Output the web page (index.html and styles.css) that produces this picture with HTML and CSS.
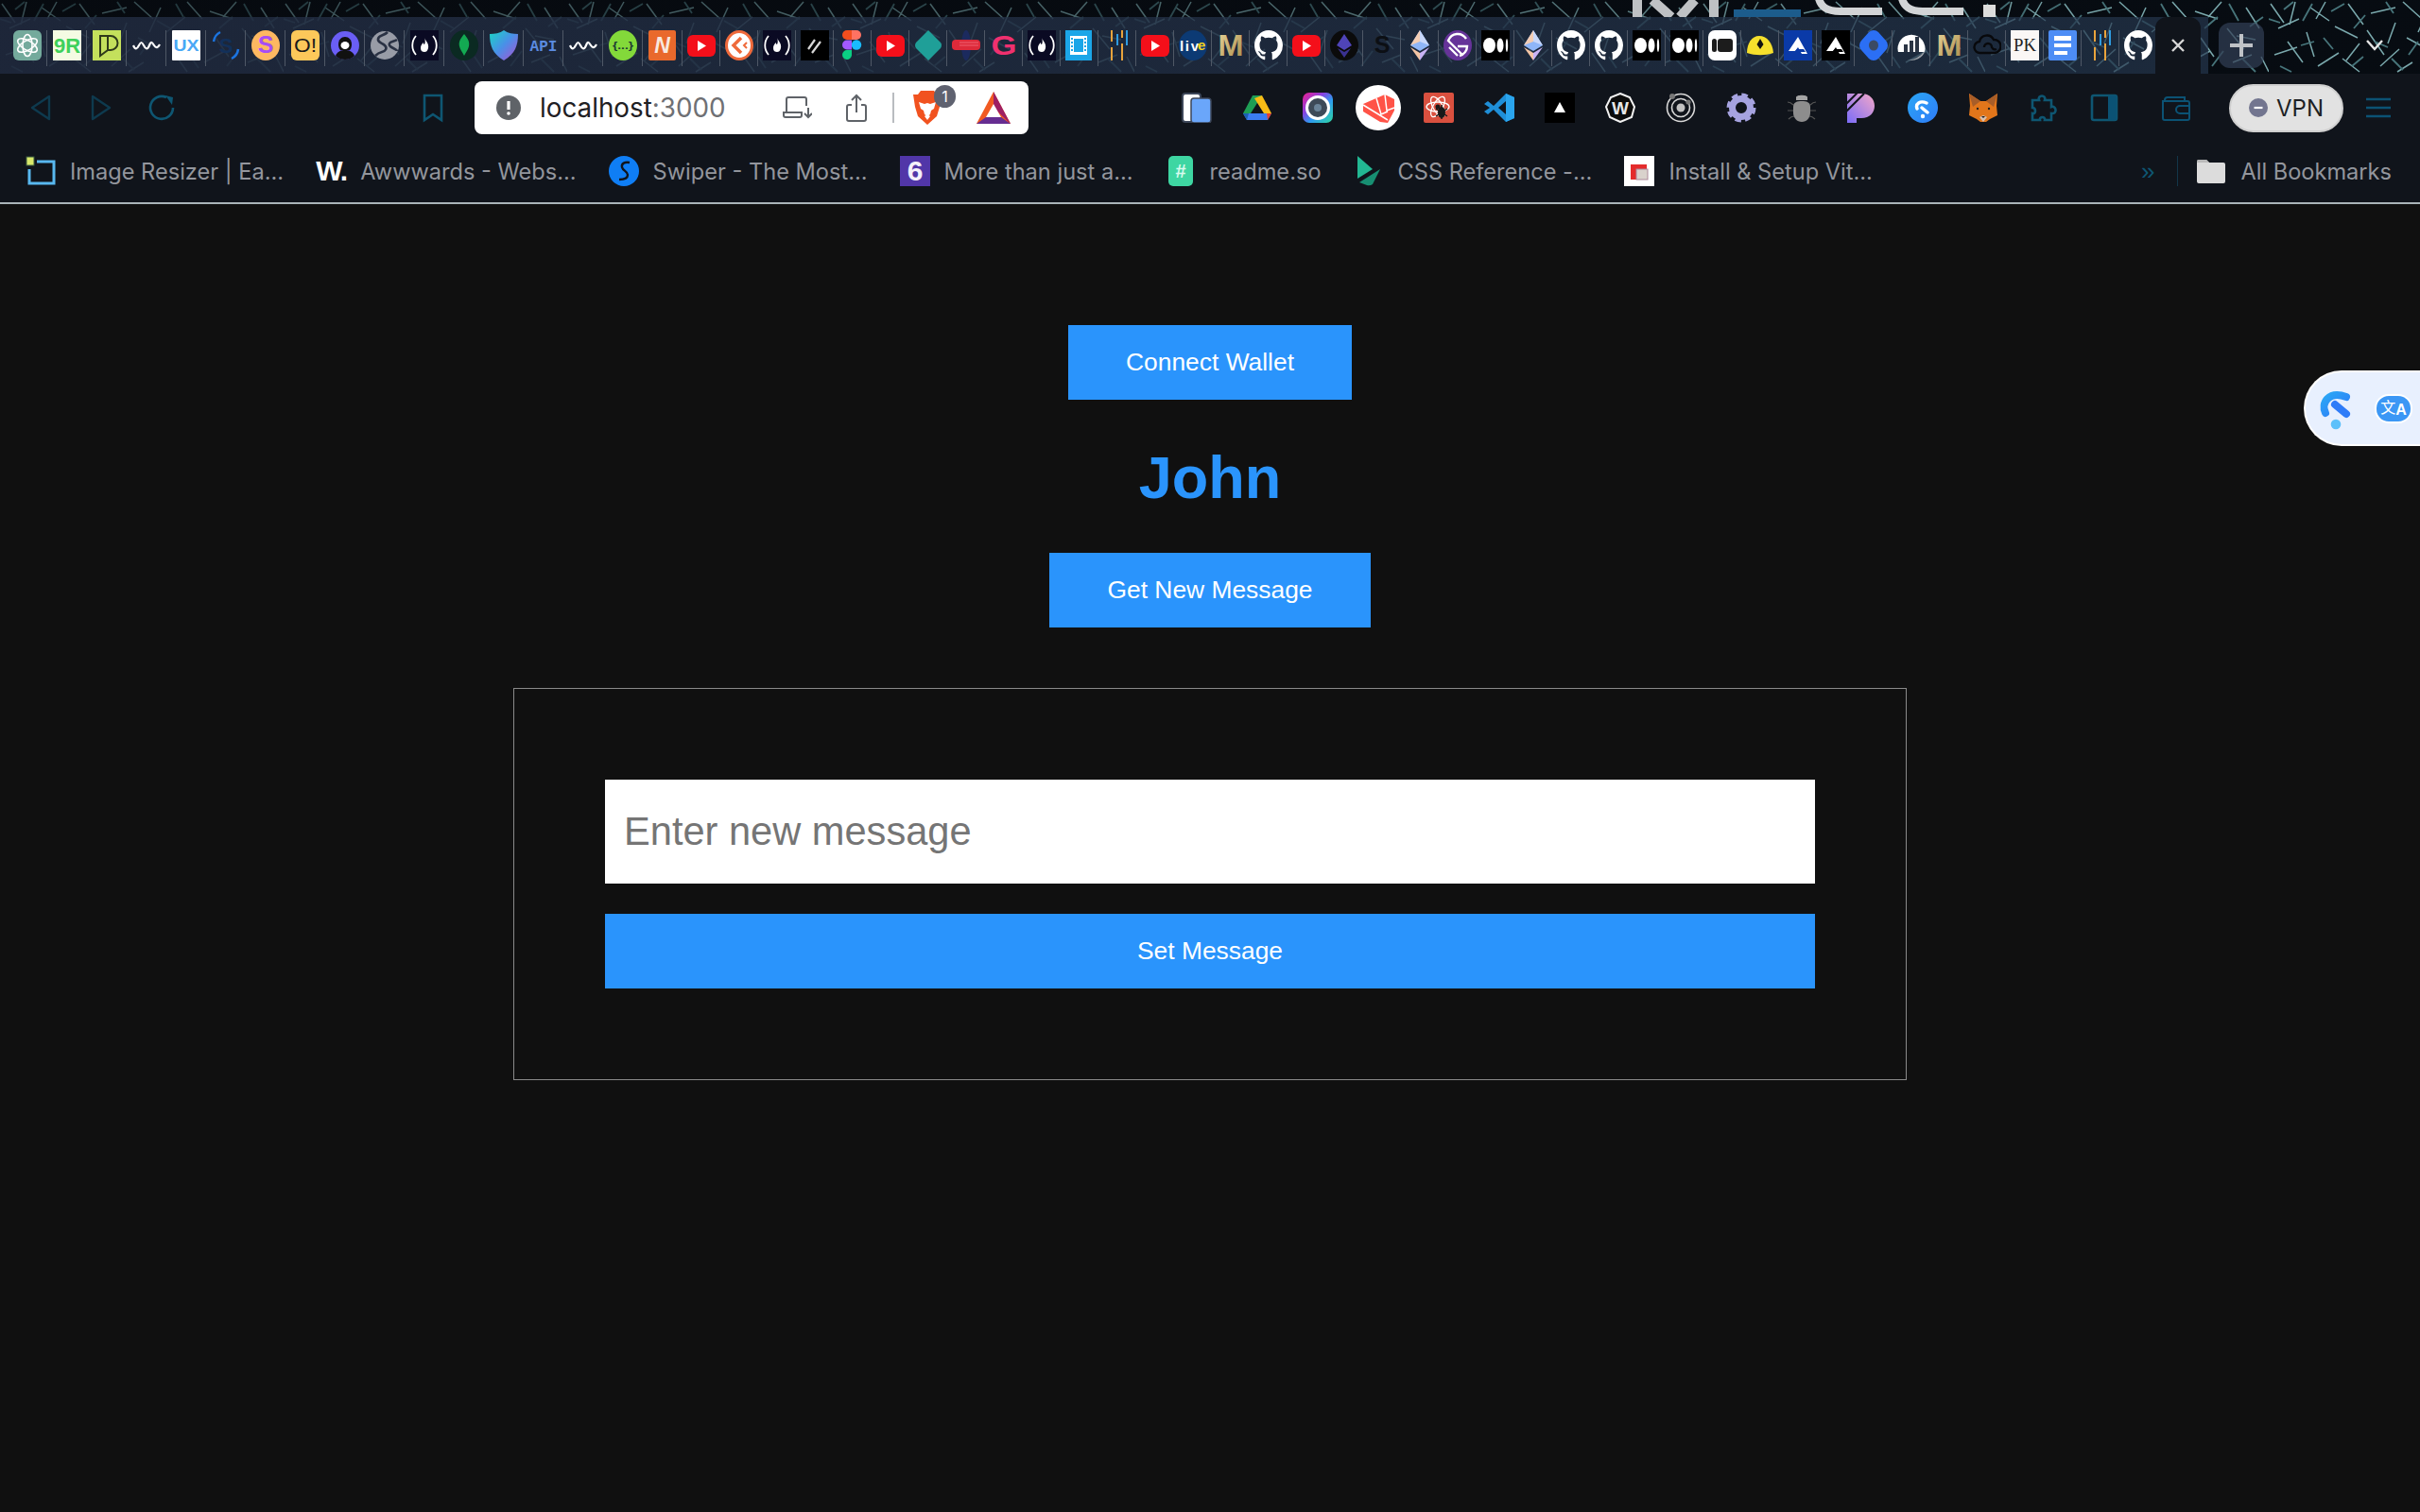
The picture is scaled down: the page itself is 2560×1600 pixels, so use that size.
FILE: index.html
```html
<!DOCTYPE html>
<html lang="en">
<head>
  <meta charset="UTF-8">
  <meta name="viewport" content="width=device-width, initial-scale=1.0">
  <title>localhost:3000</title>
  <link rel="stylesheet" href="styles.css">
</head>
<body>
  <!-- favicons used more than once -->
  <svg class="defs" aria-hidden="true">
    <defs>
      <linearGradient id="shieldGrad" x1="0" y1="0" x2="1" y2="1"><stop offset="0" stop-color="#18d6c4"/><stop offset=".5" stop-color="#4a8fe8"/><stop offset="1" stop-color="#b04fd0"/></linearGradient>
      <linearGradient id="goldGrad" x1="0" y1="0" x2="1" y2="1"><stop offset="0" stop-color="#e8d49a"/><stop offset="1" stop-color="#a88a48"/></linearGradient>
      <linearGradient id="camGrad" x1="0" y1="0" x2="1" y2="1"><stop offset="0" stop-color="#ee1f8e"/><stop offset=".35" stop-color="#8a3fe0"/><stop offset=".6" stop-color="#2d9bf0"/><stop offset="1" stop-color="#2fd8a0"/></linearGradient>
      <linearGradient id="patGrad" x1="1" y1="0" x2="0" y2="1"><stop offset="0" stop-color="#f5a8c8"/><stop offset="1" stop-color="#7a6cf8"/></linearGradient>
      <linearGradient id="siderGrad" x1="0" y1="0" x2="1" y2="1"><stop offset="0" stop-color="#2aa6f5"/><stop offset="1" stop-color="#2f7cf8"/></linearGradient>
      <symbol id="i-wave" viewBox="0 0 30 32"><path d="M1 16c2 5 4 4 6 0s3-4 5 0 4 5 6 0 3-3 5 0 4 3 6-1" fill="none" stroke="#fff" stroke-width="2.2"/></symbol>
      <symbol id="i-fcc" viewBox="0 0 30 32"><rect width="30" height="32" fill="#0a0a23"/><path d="M6 6c-5 6-5 14 0 20M24 6c5 6 5 14 0 20" fill="none" stroke="#fff" stroke-width="1.800"/><path d="M15 8c1 3 5 6 4 11-1 3-2 4-4 4s-4-1-4-4c0-3 1-4 3-6 0 1 0 2 1 2 1-2 1-4 0-7z" fill="#fff"/></symbol>
      <symbol id="i-yt" viewBox="0 0 30 32"><rect y="5" width="30" height="23" rx="6" fill="#f40f1a"/><path d="M11 11l9 5.500-9 5.500z" fill="#fff"/></symbol>
      <symbol id="i-gh" viewBox="0 0 16 16" preserveAspectRatio="none"><path fill="#fff" d="M8 0C3.580 0 0 3.580 0 8c0 3.540 2.290 6.530 5.470 7.590.4.070.55-.17.55-.38 0-.19-.01-.82-.01-1.490-2.010.37-2.530-.49-2.690-.94-.09-.23-.48-.94-.82-1.130-.28-.15-.68-.52-.01-.53.63-.01 1.080.58 1.230.82.72 1.210 1.870.87 2.330.66.07-.52.28-.87.51-1.070-1.780-.2-3.640-.89-3.640-3.950 0-.87.31-1.590.82-2.150-.08-.2-.36-1.020.08-2.120 0 0 .67-.21 2.200.82.64-.18 1.320-.27 2-.27.68 0 1.360.09 2 .27 1.530-1.040 2.200-.82 2.200-.82.44 1.100.16 1.920.08 2.120.51.56.82 1.270.82 2.150 0 3.070-1.870 3.750-3.650 3.950.29.25.54.73.54 1.480 0 1.070-.01 1.930-.01 2.200 0 .21.15.46.55.38A8.013 8.013 0 0 0 16 8c0-4.420-3.580-8-8-8z"/></symbol>
      <symbol id="i-med" viewBox="0 0 30 32"><rect width="30" height="32" fill="#000"/><ellipse cx="8.500" cy="16" rx="6.500" ry="8" fill="#fff"/><ellipse cx="20" cy="16" rx="3.500" ry="7.500" fill="#fff"/><ellipse cx="27" cy="16" rx="1.200" ry="7" fill="#fff"/></symbol>
      <symbol id="i-eth" viewBox="0 0 30 32"><path d="M15 0l10 16-10 6-10-6z" fill="#8fb6f8"/><path d="M15 0l10 16-10-4z" fill="#c9d8fa"/><path d="M15 0L5 16l10-4z" fill="#f3cdb4"/><path d="M15 24l10-6-10 14z" fill="#c9b3f5"/><path d="M15 24L5 18l10 14z" fill="#f5c6a5"/></symbol>
      <symbol id="i-gold" viewBox="0 0 30 32"><text class="txt-bold" x="15" y="27" font-size="31" text-anchor="middle" fill="url(#goldGrad)" textLength="27" lengthAdjust="spacingAndGlyphs">M</text></symbol>
      <symbol id="i-lines" viewBox="0 0 30 32"><path d="M9 0v12M9 18v14M20 0v8M20 14v18" stroke="#e8a33c" stroke-width="2" fill="none"/><path d="M15 4v12M25 0v16" stroke="#2f9be0" stroke-width="2" fill="none"/></symbol>
    </defs>
  </svg>

  <header class="tabs-area">
    <svg class="wall-logo" viewBox="0 0 400 18" aria-hidden="true">
      <path d="M9 18V0M90 18V0M25 0l20 18M70 0L54 18" stroke="#bfc1c4" stroke-width="10" fill="none"/>
      <rect x="111" y="10" width="71" height="8" fill="#1c5c8c"/>
      <path d="M200 -6c2 14 10 18 24 18h44M288 -6c2 14 10 18 24 18h42" stroke="#d2d4d6" stroke-width="8" fill="none"/>
      <rect x="375" y="5" width="13" height="13" fill="#dcdcdc"/>
    </svg>
    <div class="tab-strip">
      <div class="tab tab-wide"><svg class="fav" viewBox="0 0 30 32"><rect width="30" height="32" rx="6" fill="#74aa9c"/><g fill="none" stroke="#fff" stroke-width="1.600"><ellipse cx="15" cy="16" rx="5" ry="11.500"/><ellipse cx="15" cy="16" rx="5" ry="11.500" transform="rotate(60 15 16)"/><ellipse cx="15" cy="16" rx="5" ry="11.500" transform="rotate(-60 15 16)"/></g></svg></div>
      <div class="tab tab-wide"><svg class="fav" viewBox="0 0 30 32"><rect width="30" height="32" fill="#f4fbe3"/><text class="txt-bold" x="15" y="24" font-size="22" text-anchor="middle" fill="#3fd05a">9R</text></svg></div>
      <div class="tab tab-wide"><svg class="fav" viewBox="0 0 30 32"><rect width="30" height="32" fill="#c4e05c"/><path d="M8 6v21l8-6V6zM16 6h3a7 7 0 0 1 0 15h-3" fill="none" stroke="#2f3a1a" stroke-width="2"/></svg></div>
      <div class="tab tab-wide"><svg class="fav"><use href="#i-wave"/></svg></div>
      <div class="tab tab-wide"><svg class="fav" viewBox="0 0 30 32"><rect width="30" height="32" rx="1" fill="#fff"/><text class="txt-bold" x="15" y="22" font-size="17" text-anchor="middle" fill="#4aa8f5" textLength="27" lengthAdjust="spacingAndGlyphs">UX</text></svg></div>
      <div class="tab tab-wide"><svg class="fav" viewBox="0 0 30 32"><text class="txt-bold" x="15" y="24" font-size="22" text-anchor="middle" fill="#12305a">S</text><path d="M2 12a13 13 0 0 1 7-10M28 20a13 13 0 0 1-7 10" fill="none" stroke="#1b74e0" stroke-width="2.500"/></svg></div>
      <div class="tab tab-wide"><svg class="fav" viewBox="0 0 30 32"><ellipse cx="15" cy="16" rx="15" ry="16" fill="#fdb861"/><text class="txt-bold" x="15" y="24" font-size="25" text-anchor="middle" fill="#a64df5">S</text></svg></div>
      <div class="tab tab-wide"><svg class="fav" viewBox="0 0 30 32"><rect width="30" height="32" rx="6" fill="#fcc85a"/><text class="txt-reg" x="15" y="23" font-size="20" text-anchor="middle" fill="#1b1b1b" textLength="24" lengthAdjust="spacingAndGlyphs">O!</text></svg></div>
      <div class="tab tab-wide"><svg class="fav" viewBox="0 0 30 32"><ellipse cx="15" cy="16" rx="15" ry="15" fill="#6a5ef5"/><path d="M5 27c2-5 6-6 10-6s8 1 10 6c-3 3-7 4-10 4s-7-1-10-4z" fill="#111"/><path d="M8 15c0-5 3-8 7-8s7 3 7 8c0 3-1 5-2 6H10c-1-1-2-3-2-6z" fill="#111"/><ellipse cx="15" cy="16" rx="4.500" ry="4" fill="#fff"/></svg></div>
      <div class="tab tab-wide"><svg class="fav" viewBox="0 0 30 32"><ellipse cx="15" cy="16" rx="15" ry="15" fill="#989ca6"/><path d="M18 2c-4 4-9 3-10 7s4 4 7 7 1 6-3 7-6 3-7 4M28 10c-3 2-7 2-8 4s2 4 4 5 4 2 4 3" fill="none" stroke="#2a3244" stroke-width="2.600"/></svg></div>
      <div class="tab tab-wide"><svg class="fav"><use href="#i-fcc"/></svg></div>
      <div class="tab tab-wide"><svg class="fav" viewBox="0 0 30 32"><ellipse cx="15" cy="16" rx="15" ry="16" fill="#0b2a22"/><path d="M15 4c4 5 6 8 5 13-1 4-3 6-5 10-2-4-4-6-5-10-1-5 1-8 5-13z" fill="#13aa52"/></svg></div>
      <div class="tab tab-wide"><svg class="fav" viewBox="0 0 30 32"><path d="M15 0c4 3 10 4 15 4 0 12-3 21-15 28C3 25 0 16 0 4c5 0 11-1 15-4z" fill="url(#shieldGrad)"/></svg></div>
      <div class="tab tab-wide"><svg class="fav" viewBox="0 0 30 32"><text class="txt-mono" x="15" y="22" font-size="16" text-anchor="middle" fill="#5b8be0">API</text></svg></div>
      <div class="tab tab-wide"><svg class="fav"><use href="#i-wave"/></svg></div>
      <div class="tab tab-wide"><svg class="fav" viewBox="0 0 30 32"><ellipse cx="15" cy="16" rx="15" ry="16" fill="#83d93a"/><text class="txt-bold" x="15" y="20" font-size="11" text-anchor="middle" fill="#1d3a33" textLength="22" lengthAdjust="spacingAndGlyphs">{...}</text></svg></div>
      <div class="tab tab-wide"><svg class="fav" viewBox="0 0 30 32"><rect width="29" height="32" rx="2" fill="#e9692c"/><text class="txt-bold" x="14.500" y="24" font-size="23" text-anchor="middle" fill="#f8e8df" font-style="italic">N</text></svg></div>
      <div class="tab"><svg class="fav"><use href="#i-yt"/></svg></div>
      <div class="tab"><svg class="fav" viewBox="0 0 30 32"><ellipse cx="15" cy="16" rx="13.500" ry="14.500" fill="#fff" stroke="#ef6a3b" stroke-width="3"/><path d="M17 8l-8 8 8 8" fill="none" stroke="#ef6a3b" stroke-width="3.500"/><path d="M23 13l-3 3 3 3" fill="none" stroke="#ef6a3b" stroke-width="2"/></svg></div>
      <div class="tab"><svg class="fav"><use href="#i-fcc"/></svg></div>
      <div class="tab"><svg class="fav" viewBox="0 0 30 32"><rect width="30" height="32" fill="#000"/><path d="M8 20l7-10M12 24l9-12" stroke="#d8d8d8" stroke-width="2.200"/></svg></div>
      <div class="tab"><svg class="fav" viewBox="0 0 30 32"><path d="M15 0v10H10a5 5 0 0 1 0-10z" fill="#f24e1e" transform="translate(-1 0)"/><path d="M14 0h5a5 5 0 0 1 0 10h-5z" fill="#ff7262"/><circle cx="19" cy="15.500" r="5.200" fill="#1abcfe"/><path d="M14 10.500v10H9a5 5 0 0 1 0-10z" fill="#a259ff"/><path d="M14 21v5.500a5 5 0 1 1-5-5.500z" fill="#0acf83"/></svg></div>
      <div class="tab"><svg class="fav"><use href="#i-yt"/></svg></div>
      <div class="tab"><svg class="fav" viewBox="0 0 30 32"><path d="M15 0l13 13q2 3 0 6L15 32 2 19q-2-3 0-6z" fill="#1f9f98"/></svg></div>
      <div class="tab"><svg class="fav" viewBox="0 0 30 32"><ellipse cx="15" cy="16" rx="5" ry="16" fill="#1b2a5e"/><rect y="10" width="30" height="11" rx="4" fill="#dd2a3a"/><path d="M8 13h20M8 16h20" stroke="#f06070" stroke-width="1"/></svg></div>
      <div class="tab"><svg class="fav" viewBox="0 0 30 32"><text class="txt-bold" x="15" y="26" font-size="30" text-anchor="middle" fill="#f0306f" textLength="27" lengthAdjust="spacingAndGlyphs">G</text></svg></div>
      <div class="tab"><svg class="fav"><use href="#i-fcc"/></svg></div>
      <div class="tab"><svg class="fav" viewBox="0 0 30 32"><rect width="28" height="32" fill="#1ba6e8"/><rect x="5" y="6" width="18" height="20" fill="#fff"/><rect x="9" y="9" width="10" height="14" fill="#1ba6e8"/><path d="M7 8v16M21 8v16" stroke="#1ba6e8" stroke-width="2" stroke-dasharray="2 2"/></svg></div>
      <div class="tab"><svg class="fav"><use href="#i-lines"/></svg></div>
      <div class="tab"><svg class="fav"><use href="#i-yt"/></svg></div>
      <div class="tab"><svg class="fav" viewBox="0 0 30 32"><ellipse cx="15" cy="16" rx="15" ry="16" fill="#0c3a74"/><text class="txt-bold" x="1" y="22" font-size="15" fill="#fff" textLength="20">liv</text><text class="txt-bold" x="20" y="21" font-size="15" fill="#f2d21c">e</text></svg></div>
      <div class="tab"><svg class="fav"><use href="#i-gold"/></svg></div>
      <div class="tab"><svg class="fav"><use href="#i-gh"/></svg></div>
      <div class="tab"><svg class="fav"><use href="#i-yt"/></svg></div>
      <div class="tab"><svg class="fav" viewBox="0 0 30 32"><ellipse cx="15" cy="16" rx="15" ry="16" fill="#0b0b0b"/><path d="M15 4l8 12-8 5-8-5z" fill="#4f44b8"/><path d="M15 23l7-4-7 10-7-10z" fill="#3a3190"/></svg></div>
      <div class="tab"><svg class="fav" viewBox="0 0 30 32"><text class="txt-bold" x="15" y="24" font-size="25" text-anchor="middle" fill="#0c0f14">S</text></svg></div>
      <div class="tab"><svg class="fav"><use href="#i-eth"/></svg></div>
      <div class="tab"><svg class="fav" viewBox="0 0 30 32"><ellipse cx="15" cy="16" rx="15" ry="16" fill="#663399"/><path d="M24 9a11 12 0 0 0-19 2l15 15M6 18l9 9M15 17h10c0 4-3 9-8 10" fill="none" stroke="#fff" stroke-width="2.400"/></svg></div>
      <div class="tab"><svg class="fav"><use href="#i-med"/></svg></div>
      <div class="tab"><svg class="fav"><use href="#i-eth"/></svg></div>
      <div class="tab"><svg class="fav"><use href="#i-gh"/></svg></div>
      <div class="tab"><svg class="fav"><use href="#i-gh"/></svg></div>
      <div class="tab"><svg class="fav"><use href="#i-med"/></svg></div>
      <div class="tab"><svg class="fav"><use href="#i-med"/></svg></div>
      <div class="tab"><svg class="fav" viewBox="0 0 30 32"><rect width="30" height="32" rx="7" fill="#fff"/><rect x="4" y="9" width="5" height="14" rx="2.500" fill="#1c1c1c"/><rect x="10" y="9" width="16" height="14" rx="3" fill="#1c1c1c"/></svg></div>
      <div class="tab"><svg class="fav" viewBox="0 0 30 32"><path d="M1 24c0-10 5-18 13-18s14 7 15 18c-9 3-19 3-28 0z" fill="#f6e02c"/><path d="M15 9l3.500 6-3.500 5-3.500-5z" fill="#111"/></svg></div>
      <div class="tab"><svg class="fav" viewBox="0 0 30 32"><rect width="30" height="32" fill="#0a3aa8"/><path d="M15 7l10 18h-6l-4-7-3 4H5z" fill="#fff"/><path d="M14 20h7l2 3H11z" fill="#0a3aa8"/></svg></div>
      <div class="tab"><svg class="fav" viewBox="0 0 30 32"><rect width="30" height="32" fill="#000"/><path d="M15 7l10 18h-6l-4-7-3 4H5z" fill="#fff"/><path d="M14 20h7l2 3H11z" fill="#000"/></svg></div>
      <div class="tab"><svg class="fav" viewBox="0 0 30 32"><path d="M15 0q3 0 5 2l8 9q2 2 2 5t-2 5l-8 9q-2 2-5 2t-5-2l-8-9q-2-2-2-5t2-5l8-9q2-2 5-2z" fill="#2b6ff5"/><ellipse cx="15" cy="16" rx="5" ry="5.500" fill="#3b4a63"/></svg></div>
      <div class="tab"><svg class="fav" viewBox="0 0 30 32"><path d="M1 23a14.500 14.500 0 1 1 28 0z" fill="#fff"/><path d="M7 23v-8h4v8zM13 23V11h4v12zM19 23V7h4v16z" fill="#2b3544"/><path d="M8 32c8 0 15-3 21-10-1 6-8 11-21 10z" fill="#9aa0a6"/></svg></div>
      <div class="tab"><svg class="fav"><use href="#i-gold"/></svg></div>
      <div class="tab"><svg class="fav" viewBox="0 0 30 32"><path d="M8 24a6 6 0 0 1-1-12 8 8 0 0 1 15-2 7 7 0 0 1 1 14zM12 18a4 4 0 0 1 8 0 4 4 0 0 0 5 2" fill="none" stroke="#08090c" stroke-width="2.400"/></svg></div>
      <div class="tab"><svg class="fav" viewBox="0 0 30 32"><rect width="30" height="32" fill="#faf7f5"/><text class="txt-serif-reg" x="15" y="22" font-size="18" text-anchor="middle" fill="#222" textLength="24" lengthAdjust="spacingAndGlyphs">PK</text></svg></div>
      <div class="tab"><svg class="fav" viewBox="0 0 30 32"><rect width="30" height="32" rx="2" fill="#4d8df5"/><path d="M6 6h18v5H6zM6 14h18v4H6zM6 22h14v4H6z" fill="#fff"/></svg></div>
      <div class="tab"><svg class="fav"><use href="#i-lines"/></svg></div>
      <div class="tab tab-last"><svg class="fav"><use href="#i-gh"/></svg></div>
      <div class="tab-active">
        <svg class="tab-close" viewBox="0 0 16 16"><path d="M2 2l12 12M14 2L2 14" stroke="#d6d6d6" stroke-width="2.400" fill="none"/></svg>
      </div>
    </div>
    <div class="new-tab"><svg class="new-tab-plus" viewBox="0 0 24 24"><path d="M12 0v24M0 12h24" stroke="#bfc2c6" stroke-width="4" fill="none"/></svg></div>
    <svg class="tab-menu" viewBox="0 0 18 12"><path d="M1 1l8 9 8-9" stroke="#e6e6e6" stroke-width="2.400" fill="none"/></svg>
  </header>

  <div class="toolbar">
    <div class="tool"><svg class="tool-ic" viewBox="0 0 32 32"><path d="M25 4L7 16l18 12z" class="line-dim"/></svg></div>
    <div class="tool"><svg class="tool-ic" viewBox="0 0 32 32"><path d="M7 4l18 12L7 28z" class="line-dim"/></svg></div>
    <div class="tool"><svg class="tool-ic" viewBox="0 0 32 32"><path d="M21 5a12 12 0 1 0 7 11" class="line-blue"/><path d="M20 3l8 2-1 8z" fill="#0e5672"/></svg></div>
    <div class="tool tool-bookmark"><svg class="tool-ic" viewBox="0 0 32 32"><path d="M7 3h18v26l-9-6-9 6z" class="line-blue"/></svg></div>

    <div class="address">
      <svg class="addr-info" viewBox="0 0 26 26"><circle cx="13" cy="13" r="13" fill="#5f6368"/><path d="M13 6v9" stroke="#fff" stroke-width="3.200"/><circle cx="13" cy="19" r="1.800" fill="#fff"/></svg>
      <span class="addr-text">localhost<span class="addr-port">:3000</span></span>
      <svg class="addr-ic" viewBox="0 0 32 32"><path d="M5 20V7a2 2 0 0 1 2-2h17a2 2 0 0 1 2 2v7M2 21h19v3a2 2 0 0 1-2 2H4a2 2 0 0 1-2-2zM28 16v10M24 22l4 4 4-4" fill="none" stroke="#5f6368" stroke-width="2"/></svg>
      <svg class="addr-ic addr-share" viewBox="0 0 32 32"><path d="M11 13H8a2 2 0 0 0-2 2v13a2 2 0 0 0 2 2h16a2 2 0 0 0 2-2V15a2 2 0 0 0-2-2h-3M16 21V3M11 8l5-5 5 5" fill="none" stroke="#5f6368" stroke-width="2"/></svg>
      <span class="addr-sep"></span>
      <div class="brave">
        <svg class="brave-ic" viewBox="0 0 30 36"><path d="M8 0h14l3 4 5 0-2 13-3 10-10 9-10-9-3-10L0 4h5z" fill="#f1521f"/><path d="M6 12l6 2 3-1 3 1 6-2-2 7-3 2-1 4-3 2-3-2-1-4-3-2z" fill="#fff"/><path d="M12 27l3-2 3 2-3 4z" fill="#fff"/></svg>
        <span class="brave-badge">1</span>
      </div>
      <svg class="addr-bat" viewBox="0 0 36 36"><path d="M18 1L0 35h36z" fill="#f15a22"/><path d="M18 1v17l18 17z" fill="#9e1f63"/><path d="M0 35l10-7h16l10 7z" fill="#662d91"/><path d="M18 14l-8 14h16z" fill="#fff"/></svg>
    </div>

    <div class="tool tool-ext-first"><svg class="tool-ic" viewBox="0 0 32 32"><rect x="1" y="1" width="19" height="30" rx="3" fill="#fff" stroke="#3c4658" stroke-width="2"/><rect x="10" y="6" width="21" height="26" rx="3" fill="#6aa6fa" stroke="#3c4658" stroke-width="1.500"/></svg></div>
    <div class="tool"><svg class="tool-ic" viewBox="0 0 32 32"><path d="M11 3h10L9 22H1z" fill="#1e9e55"/><path d="M21 3l10 19h-8L13 6z" fill="#f8bc16"/><path d="M1 22h30l-4 7H5z" fill="#3b7cf0"/><path d="M26 22h5l-4 7z" fill="#e63f2e"/><path d="M1 22h6l-2 7z" fill="#1c60b0"/></svg></div>
    <div class="tool"><svg class="tool-ic" viewBox="0 0 32 32"><rect width="32" height="32" rx="7" fill="url(#camGrad)"/><circle cx="16" cy="16" r="13" fill="#fff"/><circle cx="16" cy="16" r="10" fill="#3d4a58"/><circle cx="16" cy="16" r="4" fill="#6a8398"/></svg></div>
    <div class="tool"><svg class="tool-big" viewBox="0 0 48 48"><circle cx="24" cy="24" r="24" fill="#fff"/><path d="M8 20l23-10 10 5v12l-7 13-8-1L8 28z" fill="#ff5347"/><path d="M8 21l26 16M31 10l2 17 8-3M22 14l5 17 7-3" stroke="#fff" stroke-width="1.500" fill="none"/></svg></div>
    <div class="tool"><svg class="tool-ic" viewBox="0 0 32 32"><rect width="32" height="32" rx="2" fill="#d9503f"/><g fill="none" stroke="#fff" stroke-width="1.300"><ellipse cx="15" cy="15" rx="12" ry="5"/><ellipse cx="15" cy="15" rx="12" ry="5" transform="rotate(60 15 15)"/><ellipse cx="15" cy="15" rx="12" ry="5" transform="rotate(-60 15 15)"/></g><ellipse cx="19" cy="21" rx="4" ry="6" fill="#191919"/><path d="M13 17l12 8M13 25l12-8M19 13v15" stroke="#191919" stroke-width="1.500"/><circle cx="15" cy="15" r="2.500" fill="#191919"/></svg></div>
    <div class="tool"><svg class="tool-ic" viewBox="0 0 32 32"><path d="M23 1l9 4v22l-9 4-13-13-6 5-4-3 6-4-6-4 4-3 6 5z" fill="#1f8fd8"/><path d="M23 1l9 4v22l-9 4z" fill="#2aa5ee"/><path d="M23 9l-8 7 8 7z" fill="#10141b"/></svg></div>
    <div class="tool"><svg class="tool-ic" viewBox="0 0 32 32"><rect width="32" height="32" fill="#000"/><path d="M16 10l6 11H10z" fill="#fff"/></svg></div>
    <div class="tool"><svg class="tool-ic" viewBox="0 0 32 32"><path d="M16 1l10 4 5 10-3 11-12 5-11-5L1 15 6 5z" fill="#0c0c0c" stroke="#f2f2f2" stroke-width="2"/><text class="txt-bold" x="16" y="23" font-size="19" text-anchor="middle" fill="#e8e8e8">W</text></svg></div>
    <div class="tool"><svg class="tool-ic" viewBox="0 0 32 32"><circle cx="16" cy="16" r="14.500" fill="none" stroke="#d8d8d8" stroke-width="1.600"/><circle cx="16" cy="16" r="9.500" fill="none" stroke="#d8d8d8" stroke-width="1.600"/><circle cx="16" cy="16" r="4.500" fill="#c2c2c2"/><circle cx="7" cy="4" r="3" fill="#777"/><circle cx="24" cy="10" r="2.600" fill="#777"/></svg></div>
    <div class="tool"><svg class="tool-ic" viewBox="0 0 32 32"><circle cx="16" cy="16" r="9.500" fill="none" stroke="#a6a3e0" stroke-width="7"/><circle cx="16" cy="16" r="13" fill="none" stroke="#a6a3e0" stroke-width="5" stroke-dasharray="6.200 4"/></svg></div>
    <div class="tool"><svg class="tool-ic" viewBox="0 0 32 32"><path d="M1 10c3 0 4 1 6 3M31 10c-3 0-4 1-6 3M1 19h6M31 19h-6M2 28c2-2 3-3 6-3M30 28c-2-2-3-3-6-3" stroke="#555" stroke-width="1.200" fill="none"/><path d="M10 5c0-3 12-3 12 0v3H10z" fill="#a5a5a5"/><path d="M7 15c0-5 4-6 9-6s9 1 9 6v6c0 6-4 10-9 10s-9-4-9-10z" fill="#8d8d8d"/></svg></div>
    <div class="tool"><svg class="tool-ic" viewBox="0 0 32 32"><path d="M0 1h15c9 0 14 6 14 13s-5 13-14 13H10v5H0z" fill="url(#patGrad)"/><path d="M-1 12L12 -1M-1 20L18 1" stroke="#10141b" stroke-width="2"/></svg></div>
    <div class="tool"><svg class="tool-ic" viewBox="0 0 32 32"><circle cx="16" cy="16" r="16" fill="url(#siderGrad)"/><path d="M10 17c-2-5 3-9 10-6M15 16l6 5" fill="none" stroke="#fff" stroke-width="3.400" stroke-linecap="round"/><circle cx="16" cy="25" r="2.200" fill="#fff"/></svg></div>
    <div class="tool"><svg class="tool-ic" viewBox="0 0 32 32"><path d="M1 1l12 8h6l12-8-1 13 1 10-8 4-4 3h-6l-4-3-8-4 1-10z" fill="#e2761b"/><path d="M1 1l12 8-8 6zM31 1l-12 8 8 6z" fill="#a85d28"/><path d="M12 26l4 5 4-5-4-2z" fill="#d7c1b3"/><path d="M14 25h4l-2 2z" fill="#222"/><circle cx="10" cy="17" r="1.200" fill="#222"/><circle cx="22" cy="17" r="1.200" fill="#222"/></svg></div>
    <div class="tool"><svg class="tool-ic" viewBox="0 0 32 32"><path d="M4 8h7c-2-6 8-6 6 0h7v7c5-2 7 8 0 7v7h-7c1-4-6-4-5 0H4v-7c4 1 4-6 0-6z" class="line-blue"/></svg></div>
    <div class="tool"><svg class="tool-ic" viewBox="0 0 32 32"><rect x="3" y="3" width="26" height="26" rx="2" class="line-blue"/><rect x="20" y="3" width="9" height="26" fill="#0b5274"/></svg></div>
    <div class="tool tool-wallet"><svg class="tool-ic" viewBox="0 0 32 32"><path d="M4 8a3 3 0 0 1 3-3h18v4M2 9h26a2 2 0 0 1 2 2v16a2 2 0 0 1-2 2H4a2 2 0 0 1-2-2V8" class="line-wallet"/><path d="M30 14H20a4 4 0 0 0 0 8h10" class="line-wallet"/></svg></div>
    <div class="vpn">
      <svg class="vpn-ic" viewBox="0 0 20 20"><circle cx="10" cy="10" r="10" fill="#72758f"/><path d="M5.500 10h9" stroke="#fff" stroke-width="2.200"/></svg>
      <span>VPN</span>
    </div>
    <div class="tool tool-menu"><svg class="tool-ic" viewBox="0 0 32 32"><path d="M3 7h26M3 16h26M3 25h26" stroke="#0b5274" stroke-width="2.400" fill="none"/></svg></div>
  </div>

  <nav class="bookmarks">
    <a class="bm">
      <svg class="bm-ic" viewBox="0 0 32 32"><path d="M12 6h18v23H4V14" fill="none" stroke="#58b8f0" stroke-width="3"/><rect x="1" y="1" width="8" height="9" fill="#d8e86a" stroke="#3a5a40"/></svg>
      <span>Image Resizer | Ea...</span>
    </a>
    <a class="bm">
      <span class="bm-w">W.</span>
      <span>Awwwards - Webs...</span>
    </a>
    <a class="bm">
      <svg class="bm-ic" viewBox="0 0 32 32"><circle cx="16" cy="16" r="16" fill="#0f7ef5"/><path d="M22 7c-5-1-9 1-8 5s6 4 6 8-4 5-9 5" fill="none" stroke="#10141b" stroke-width="2.400"/></svg>
      <span>Swiper - The Most...</span>
    </a>
    <a class="bm">
      <svg class="bm-ic" viewBox="0 0 32 32"><rect width="32" height="32" fill="#5136a8"/><text class="txt-bold" x="16" y="26" font-size="30" text-anchor="middle" fill="#f4f0fa">6</text></svg>
      <span>More than just a...</span>
    </a>
    <a class="bm">
      <svg class="bm-ic" viewBox="0 0 32 32"><rect x="3" width="26" height="32" rx="5" fill="#3ed6a2"/><text class="txt-bold" x="16" y="23" font-size="20" text-anchor="middle" fill="#d8fbee">#</text></svg>
      <span>readme.so</span>
    </a>
    <a class="bm">
      <svg class="bm-ic" viewBox="0 0 32 32"><path d="M4 0l16 14L4 24z" fill="#22b893"/><path d="M6 28l22-14-8 16q-3 2-6 1z" fill="#178f72"/></svg>
      <span>CSS Reference -...</span>
    </a>
    <a class="bm">
      <svg class="bm-ic" viewBox="0 0 32 32"><rect width="32" height="32" fill="#fff"/><path d="M7 9h17v5H13v11H7z" fill="#e42c2c"/><rect x="13" y="14" width="12" height="11" fill="#d9d2cc" stroke="#a89" stroke-width="1"/></svg>
      <span>Install &amp; Setup Vit...</span>
    </a>
    <span class="bm-more">»</span>
    <span class="bm-sep"></span>
    <a class="bm bm-all">
      <svg class="bm-ic" viewBox="0 0 32 32"><path d="M1 6a2 2 0 0 1 2-2h8l3 3h15a2 2 0 0 1 2 2v18a2 2 0 0 1-2 2H3a2 2 0 0 1-2-2z" fill="#dcdcdc"/><path d="M1 6a2 2 0 0 1 2-2h8l3 3H1z" fill="#b9b9b9"/></svg>
      <span>All Bookmarks</span>
    </a>
  </nav>

  <main class="page">
    <button class="btn btn-connect" type="button">Connect Wallet</button>
    <h1 class="name">John</h1>
    <button class="btn btn-get" type="button">Get New Message</button>
    <form class="card">
      <input class="msg-input" type="text" placeholder="Enter new message">
      <button class="btn btn-set" type="button">Set Message</button>
    </form>
  </main>

  <aside class="sider">
    <svg class="sider-logo" viewBox="0 0 36 45"><path d="M8 27C3 17 11 3 30 10" fill="none" stroke="url(#siderGrad)" stroke-width="8" stroke-linecap="round"/><path d="M18 18l12 10" fill="none" stroke="#2f7cf8" stroke-width="8" stroke-linecap="round"/><circle cx="19" cy="39" r="5.300" fill="#5cc0fa"/></svg>
    <div class="sider-trans"><span class="sider-zh">文</span><span class="sider-a">A</span></div>
  </aside>
</body>
</html>
```

FILE: styles.css
```css
* {
  box-sizing: border-box;
}

body {
  margin: 0;
  min-height: 1600px;
  background: #101010;
  font-family: "Liberation Sans", Arial, sans-serif;
  overflow: hidden;
  position: relative;
}

.defs {
  position: absolute;
  width: 0;
  height: 0;
}

.txt-bold { font-family: "Liberation Sans", sans-serif; font-weight: bold; }
.txt-reg { font-family: "Liberation Sans", sans-serif; }
.txt-mono { font-family: "Liberation Mono", monospace; font-weight: bold; }
.txt-serif-reg { font-family: "Liberation Serif", serif; }

/* wallpaper showing through the tab strip */
.tabs-area {
  position: relative;
  display: flex;
  align-items: flex-start;
  height: 78px;
  padding-top: 18px;
  background-color: #070c12;
  background-image:
    linear-gradient(90deg, rgba(6, 9, 14, .6), rgba(6, 9, 14, .42) 60%, rgba(6, 9, 14, .05) 90%),
    url("data:image/svg+xml,%3Csvg xmlns='http://www.w3.org/2000/svg' width='300' height='78'%3E%3Cg stroke='%237fb0b4' stroke-width='1.500' fill='none'%3E%3Cpath d='M2 4l14 20M10 30l22-10M28 2l-6 24M20 44l16 22M6 58l24-8M44 8l20 14M40 34l8 26M52 70l22-14M60 2l-10 18M70 28l24 12M78 62l18 14M84 4l16 22M96 46l-14 18M108 14l26-6M104 32l18 26M118 70l20-18M134 24l-8 22M142 2l20 18M146 40l22 12M152 66l-16 10M170 8l-12 26M176 34l20-16M184 56l14 20M198 2l16 18M204 32l-8 24M216 66l22-12M222 12l24 8M228 40l14 20M250 2l-14 16M256 30l18 22M262 66l20-8M276 8l14 22M286 42l-20-4M292 60l8 16'/%3E%3C/g%3E%3Cg stroke='%234a7a80' stroke-width='1.800' fill='none'%3E%3Cpath d='M0 20l12 4M16 10l10-8M12 70l12 6M34 48l14-4M36 22l10-18M58 40l10 12M66 12l14-8M90 30l12-14M88 70l12-10M112 44l14 6M124 2l8 12M130 62l12 12M158 44l-10 14M166 22l14 8M186 4l8 14M190 46l12-8M210 72l-8-12M232 30l14-12M240 70l12-16M268 22l-10-18M272 62l14 14M294 18l-14 10'/%3E%3C/g%3E%3C/svg%3E");
}

.wall-logo {
  position: absolute;
  top: 0;
  left: 1723px;
  width: 400px;
  height: 18px;
}

.tab-strip {
  display: flex;
  width: 2336px;
  height: 60px;
  padding: 0 8px;
  background: linear-gradient(90deg, rgba(34, 44, 66, .82), rgba(38, 56, 80, .68));
}

.tab {
  position: relative;
  display: flex;
  align-items: center;
  justify-content: center;
  flex: 0 0 40px;
  height: 60px;
}

.tab-wide {
  flex-basis: 42px;
}

.tab::after {
  content: "";
  position: absolute;
  top: 14px;
  right: 0;
  width: 1px;
  height: 38px;
  background: #4f5866;
}

.tab-last::after {
  display: none;
}

.fav {
  width: 30px;
  height: 32px;
}

.tab-active {
  display: flex;
  align-items: center;
  justify-content: center;
  flex: 0 0 48px;
  margin-left: -2px;
  height: 60px;
  background: #10141b;
  border-radius: 12px 12px 0 0;
}

.tab-close {
  width: 16px;
  height: 16px;
}

.new-tab {
  display: flex;
  align-items: center;
  justify-content: center;
  width: 48px;
  height: 48px;
  margin: 6px 0 0 11px;
  border-radius: 12px;
  background: rgba(50, 62, 84, .72);
}

.new-tab-plus {
  width: 24px;
  height: 24px;
}

.tab-menu {
  width: 18px;
  height: 12px;
  margin: 24px 0 0 108px;
}

/* toolbar */
.toolbar {
  display: flex;
  align-items: center;
  height: 72px;
  padding-left: 11px;
  background: #10141b;
}

.tool {
  display: flex;
  align-items: center;
  justify-content: center;
  flex: 0 0 64px;
  height: 48px;
}

.tool-ic {
  width: 32px;
  height: 32px;
}

.tool-big {
  width: 48px;
  height: 48px;
}

.line-dim {
  fill: none;
  stroke: #0e3a4e;
  stroke-width: 2.400;
  stroke-linejoin: round;
}

.line-blue {
  fill: none;
  stroke: #0e5672;
  stroke-width: 2.600;
}

.line-wallet {
  fill: none;
  stroke: #0b5274;
  stroke-width: 2;
}

.tool-bookmark {
  margin-left: 223px;
}

.address {
  display: flex;
  align-items: center;
  flex: 0 0 586px;
  height: 56px;
  margin-left: 12px;
  padding: 0 19px 0 23px;
  border-radius: 8px;
  background: #fff;
}

.addr-info {
  width: 26px;
  height: 26px;
  flex: none;
}

.addr-text {
  flex: 1;
  margin-left: 20px;
  font-family: Inter, sans-serif;
  font-size: 27.800px;
  color: #1f2023;
}

.addr-port {
  color: #6f7074;
}

.addr-ic {
  width: 32px;
  height: 32px;
  flex: none;
}

.addr-share {
  margin-left: 31px;
}

.addr-sep {
  width: 2px;
  height: 32px;
  margin-left: 22px;
  background: #b9bcc0;
}

.brave {
  position: relative;
  width: 30px;
  height: 36px;
  margin-left: 20px;
}

.brave-ic {
  width: 30px;
  height: 36px;
}

.brave-badge {
  position: absolute;
  top: -6px;
  left: 22px;
  width: 23px;
  height: 24px;
  border-radius: 12px;
  background: #5f6270;
  color: #fff;
  font-family: Inter, sans-serif;
  font-size: 16px;
  line-height: 24px;
  text-align: center;
}

.addr-bat {
  width: 36px;
  height: 36px;
  margin-left: 37px;
  flex: none;
}

.tool-ext-first {
  margin-left: 146px;
}

.tool-wallet {
  margin-left: 12px;
}

.vpn {
  display: flex;
  align-items: center;
  justify-content: center;
  gap: 9px;
  flex: 0 0 121px;
  height: 51px;
  margin-left: 24px;
  border: 2px solid #cfcfcf;
  border-radius: 26px;
  background: #e2e2e2;
  color: #1d1f24;
  font-family: Inter, sans-serif;
  font-size: 24px;
}

.vpn-ic {
  width: 20px;
  height: 20px;
}

.tool-menu {
  margin-left: 5px;
}

/* bookmarks bar */
.bookmarks {
  display: flex;
  align-items: center;
  height: 66px;
  padding: 0 0 2px 27px;
  background: #10141b;
  border-bottom: 2px solid #aab4b8;
}

.bm {
  display: flex;
  align-items: center;
  gap: 15px;
  margin-right: 34px;
  color: #93969d;
  font-family: Inter, sans-serif;
  font-size: 23.600px;
  white-space: nowrap;
}

.bm-ic {
  width: 32px;
  height: 32px;
  flex: none;
}

.bm-w {
  width: 32px;
  color: #fff;
  font-family: "Liberation Sans", sans-serif;
  font-size: 30px;
  font-weight: bold;
  letter-spacing: -1px;
}

.bm-more {
  margin-left: auto;
  color: #0e5672;
  font-size: 26px;
}

.bm-sep {
  width: 1px;
  height: 32px;
  margin-left: 24px;
  background: #12364a;
}

.bm-all {
  margin: 0 30px 0 19px;
}

/* page */
.page {
  display: flex;
  flex-direction: column;
  align-items: center;
  padding-top: 128px;
}

.btn {
  height: 79px;
  border: none;
  background: #2a94fc;
  color: #fff;
  font-family: "Liberation Sans", Arial, sans-serif;
  font-size: 26.400px;
}

.btn-connect {
  width: 300px;
}

.btn-get {
  width: 340px;
}

.name {
  margin: 45px 0 43px;
  color: #2a94fc;
  font-size: 63px;
  line-height: 74px;
}

.card {
  display: flex;
  flex-direction: column;
  gap: 32px;
  width: 1474px;
  margin-top: 64px;
  padding: 96px;
  border: 1px solid #8a8a8a;
}

.msg-input {
  height: 110px;
  padding: 0 20px;
  border: none;
  background: #fff;
  font-family: "Liberation Sans", Arial, sans-serif;
  font-size: 41.600px;
}

.msg-input::placeholder {
  color: #757575;
}

.btn-set {
  width: 100%;
}

/* floating sidebar from a browser extension */
.sider {
  position: absolute;
  top: 392px;
  right: 0;
  display: flex;
  align-items: center;
  width: 123px;
  height: 80px;
  padding-left: 13px;
  border: 2px solid #fff;
  border-right: none;
  border-radius: 40px 0 0 40px;
  background: #e8f0fe;
}

.sider-logo {
  width: 36px;
  height: 45px;
}

.sider-trans {
  display: flex;
  align-items: center;
  justify-content: center;
  width: 40px;
  height: 31px;
  margin-left: 24px;
  border: 2px solid #fff;
  border-radius: 15px;
  background: #3b97f5;
  color: #fff;
}

.sider-zh {
  font-family: "Noto Sans CJK SC", sans-serif;
  font-size: 16px;
  line-height: 1;
  margin-top: -4px;
}

.sider-a {
  font-size: 16px;
  font-weight: bold;
  line-height: 1;
  margin-top: 4px;
}
```
